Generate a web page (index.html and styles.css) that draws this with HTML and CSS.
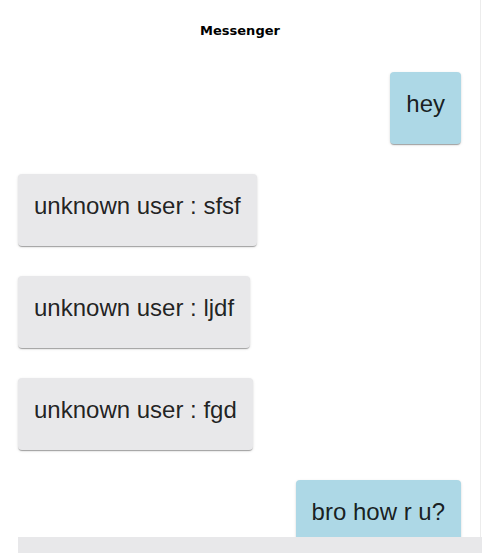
FILE: index.html
```html
<!DOCTYPE html>
<html>
<head>
<meta charset="utf-8">
<link rel="stylesheet" href="styles.css">
</head>
<body>
<div class="app">
  <header class="header">Messenger</header>
  <main class="messages">
    <div class="row row-me"><div class="bubble bubble-me">hey</div></div>
    <div class="row row-other"><div class="bubble bubble-other">unknown user : sfsf</div></div>
    <div class="row row-other"><div class="bubble bubble-other">unknown user : ljdf</div></div>
    <div class="row row-other"><div class="bubble bubble-other">unknown user : fgd</div></div>
    <div class="row row-me"><div class="bubble bubble-me">bro how r u?</div></div>
  </main>
  <div class="composer"></div>
</div>
</body>
</html>
```
FILE: styles.css
```css
html, body {
  margin: 0;
  padding: 0;
  background: #fff;
  overflow: hidden;
}
.app {
  width: 480px;
  height: 553px;
  border-right: 1px solid #ececec;
  box-sizing: content-box;
  font-family: "Liberation Sans", Arial, sans-serif;
}
.header {
  height: 60px;
  display: flex;
  align-items: center;
  justify-content: center;
  font-family: "DejaVu Sans", sans-serif;
  font-weight: bold;
  font-size: 13px;
  color: #000;
}
.messages {
  padding: 12px 19px 0 18px;
  display: flex;
  flex-direction: column;
  gap: 30px;
}
.row {
  display: flex;
}
.row-me {
  justify-content: flex-end;
}
.row-other {
  justify-content: flex-start;
}
.bubble {
  font-size: 24px;
  line-height: 28px;
  padding: 18px 16px 26px;
  border-radius: 4px;
  color: rgba(0, 0, 0, 0.87);
  box-shadow: 0 2px 1px -1px rgba(0,0,0,0.2), 0 1px 1px 0 rgba(0,0,0,0.14), 0 1px 3px 0 rgba(0,0,0,0.12);
}
.bubble-me {
  background: #add8e6;
}
.bubble-other {
  background: #e8e8ea;
}
.composer {
  position: fixed;
  left: 18px;
  right: 0;
  bottom: 0;
  height: 16px;
  background: #e8e8ea;
}
```
